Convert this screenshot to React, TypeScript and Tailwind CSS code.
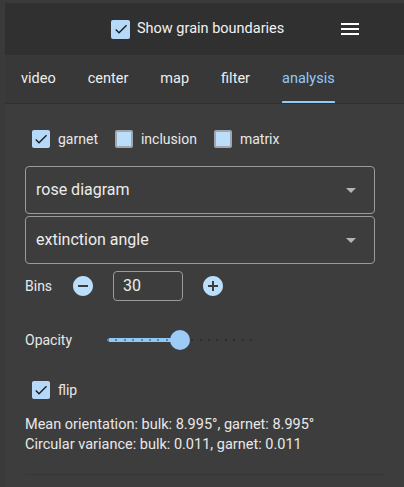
import React from "react";

function Box({ checked, size = 18 }: { checked: boolean; size?: number }) {
  return (
    <span
      className={
        checked
          ? "flex items-center justify-center rounded-[2px] bg-[#b6d9fa]"
          : "flex items-center justify-center rounded-[2px] bg-[#bbdefb] border-2 border-[#9ea7b0]"
      }
      style={{ width: size, height: size }}
    >
      {checked && (
        <svg viewBox="0 0 24 24" className="w-[16px] h-[16px]">
          <path d="M9 16.17 4.83 12l-1.42 1.41L9 19 21 7l-1.41-1.41z" fill="#1b1b1b" />
        </svg>
      )}
    </span>
  );
}

function Check({ label, checked }: { label: string; checked: boolean }) {
  return (
    <label className="flex items-center gap-[8px] text-[14px] leading-[20px] text-[#e8e8e8]">
      <Box checked={checked} />
      <span>{label}</span>
    </label>
  );
}

function Select({ value }: { value: string }) {
  return (
    <div className="h-[48px] w-[350px] rounded-[4px] border border-[#9b9b9b] flex items-center pl-[10px] text-[16px] text-[#ececec]">
      <span>{value}</span>
      <svg viewBox="0 0 24 24" className="ml-auto mr-[11px] w-6 h-6">
        <path d="M7 10l5 5 5-5z" fill="#aeb6bf" />
      </svg>
    </div>
  );
}

const tabs = ["video", "center", "map", "filter", "analysis"];

function Slider() {
  const width = 143;
  const value = 0.5;
  const marks = Array.from({ length: 18 }, (_, i) => (i * width) / 17);
  return (
    <div className="relative h-[20px]" style={{ width }}>
      <div
        className="absolute left-0 top-[8px] h-[4px] rounded-full bg-[#90caf9]"
        style={{ width: width * value }}
      />
      {marks.map((m, i) => (
        <span
          key={i}
          className={
            m < width * value
              ? "absolute top-[9px] w-[2px] h-[2px] bg-[#5d84a6]"
              : "absolute top-[9px] w-[2px] h-[2px] bg-[#2a2e33]"
          }
          style={{ left: m - 1 }}
        />
      ))}
      <span
        className="absolute top-0 w-[20px] h-[20px] rounded-full bg-[#9ccbf8]"
        style={{ left: width * value - 10 }}
      />
    </div>
  );
}

export default function App() {
  return (
    <div
      className="w-[404px] h-[487px] overflow-hidden bg-[#3a3a3a] pl-[5px] pt-[3px]"
      style={{ fontFamily: "Roboto, 'Liberation Sans', sans-serif" }}
    >
      {/* Top bar */}
      <header className="h-[52px] bg-[#303030] flex items-center">
        <label className="ml-[106px] flex items-center gap-[7px] text-[14.5px] text-[#f2f2f2]">
          <Box checked size={19} />
          <span>Show grain boundaries</span>
        </label>
        <div className="ml-auto mr-[45px] flex flex-col gap-[3px]">
          <span className="w-[18px] h-[2px] bg-white" />
          <span className="w-[18px] h-[2px] bg-white" />
          <span className="w-[18px] h-[2px] bg-white" />
        </div>
      </header>

      {/* Tabs */}
      <nav className="h-[49px] bg-[#383838] border-b border-[#2d3135] flex">
        {tabs.map((t) => (
          <div key={t} className="h-full px-4 flex items-center">
            <span
              className={
                t === "analysis"
                  ? "relative h-full flex items-center text-[14.5px] text-[#90caf9]"
                  : "relative h-full flex items-center text-[14.5px] text-[#eeeeee]"
              }
            >
              {t}
              {t === "analysis" && (
                <span className="absolute left-0 right-0 bottom-0 h-[2px] rounded-t-[1px] bg-[#90caf9]" />
              )}
            </span>
          </div>
        ))}
      </nav>

      {/* Analysis panel */}
      <main className="h-full bg-[#3d3d3d] pl-[20px] pt-[25px] flex flex-col">
        <div className="ml-[7px] flex items-center gap-[17px]">
          <Check label="garnet" checked />
          <Check label="inclusion" checked={false} />
          <Check label="matrix" checked={false} />
        </div>

        <div className="mt-[17px] flex flex-col gap-[2px]">
          <Select value="rose diagram" />
          <Select value="extinction angle" />
        </div>

        <div className="mt-[7px] h-[30px] flex items-center gap-[18px] text-[14px] text-[#e8e8e8]">
          <span className="w-[28px]">Bins</span>
          <svg viewBox="0 0 24 24" className="w-6 h-6">
            <path
              d="M12 2C6.48 2 2 6.48 2 12s4.48 10 10 10 10-4.48 10-10S17.52 2 12 2zm5 11H7v-2h10v2z"
              fill="#bbdefb"
            />
          </svg>
          <div className="w-[70px] h-[30px] rounded-[4px] border border-[#9b9b9b] flex items-center pl-[9px] text-[16px] text-[#ececec]">
            30
          </div>
          <svg viewBox="0 0 24 24" className="w-6 h-6">
            <path
              d="M12 2C6.48 2 2 6.48 2 12s4.48 10 10 10 10-4.48 10-10S17.52 2 12 2zm5 11h-4v4h-2v-4H7v-2h4V7h2v4h4v2z"
              fill="#bbdefb"
            />
          </svg>
        </div>

        <div className="mt-[29px] h-[20px] flex items-center text-[14px] text-[#e8e8e8]">
          <span className="w-[83px]">Opacity</span>
          <Slider />
        </div>

        <div className="mt-[30px] ml-[7px]">
          <Check label="flip" checked />
        </div>

        <div className="mt-[15px] text-[14.5px] leading-[20px] text-[#e8e8e8]">
          <p>Mean orientation: bulk: 8.995°, garnet: 8.995°</p>
          <p>Circular variance: bulk: 0.011, garnet: 0.011</p>
        </div>

        <div className="mt-[19px] w-[360px] h-[1px] bg-[#33373b]" />
      </main>
    </div>
  );
}
